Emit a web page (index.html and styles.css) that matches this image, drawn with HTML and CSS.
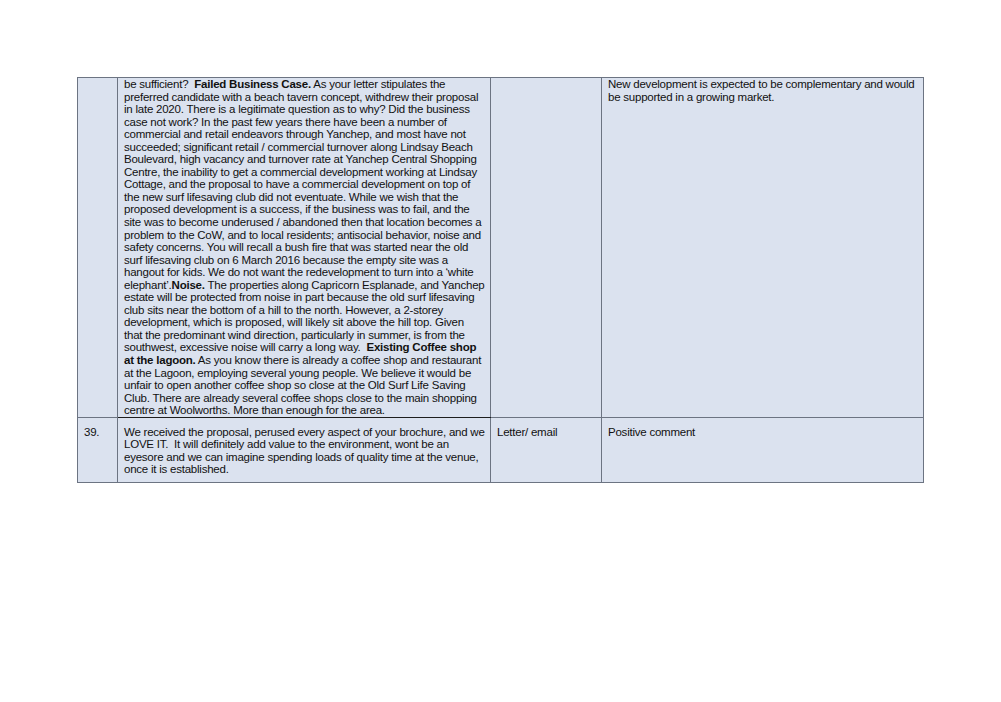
FILE: index.html
```html
<!DOCTYPE html>
<html>
<head>
<meta charset="utf-8">
<link rel="stylesheet" href="styles.css">
</head>
<body>
<div class="page">
<table class="tbl">
<colgroup>
<col class="c1"><col class="c2"><col class="c3"><col class="c4">
</colgroup>
<tr class="r1">
<td></td>
<td class="dark-bottom lines">be sufficient?&nbsp; <b>Failed Business Case.</b> As your letter stipulates the<br>
preferred candidate with a beach tavern concept, withdrew their proposal<br>
in late 2020. There is a legitimate question as to why? Did the business<br>
case not work? In the past few years there have been a number of<br>
commercial and retail endeavors through Yanchep, and most have not<br>
succeeded; significant retail / commercial turnover along Lindsay Beach<br>
Boulevard, high vacancy and turnover rate at Yanchep Central Shopping<br>
Centre, the inability to get a commercial development working at Lindsay<br>
Cottage, and the proposal to have a commercial development on top of<br>
the new surf lifesaving club did not eventuate. While we wish that the<br>
proposed development is a success, if the business was to fail, and the<br>
site was to become underused / abandoned then that location becomes a<br>
problem to the CoW, and to local residents; antisocial behavior, noise and<br>
safety concerns. You will recall a bush fire that was started near the old<br>
surf lifesaving club on 6 March 2016 because the empty site was a<br>
hangout for kids. We do not want the redevelopment to turn into a ‘white<br>
elephant’.<b>Noise.</b> The properties along Capricorn Esplanade, and Yanchep<br>
estate will be protected from noise in part because the old surf lifesaving<br>
club sits near the bottom of a hill to the north. However, a 2-storey<br>
development, which is proposed, will likely sit above the hill top. Given<br>
that the predominant wind direction, particularly in summer, is from the<br>
southwest, excessive noise will carry a long way.&nbsp; <b>Existing Coffee shop</b><br>
<b>at the lagoon.</b> As you know there is already a coffee shop and restaurant<br>
at the Lagoon, employing several young people. We believe it would be<br>
unfair to open another coffee shop so close at the Old Surf Life Saving<br>
Club. There are already several coffee shops close to the main shopping<br>
centre at Woolworths. More than enough for the area.</td>
<td></td>
<td class="lines">New development is expected to be complementary and would<br>
be supported in a growing market.</td>
</tr>
<tr class="r2">
<td>39.</td>
<td class="lines">We received the proposal, perused every aspect of your brochure, and we<br>
LOVE IT.&nbsp; It will definitely add value to the environment, wont be an<br>
eyesore and we can imagine spending loads of quality time at the venue,<br>
once it is established.</td>
<td>Letter/ email</td>
<td>Positive comment</td>
</tr>
</table>
</div>
</body>
</html>
```
FILE: styles.css
```css
html, body {
  margin: 0;
  padding: 0;
  background: #ffffff;
}
.page {
  padding: 77px 0 0 77px;
}
.tbl {
  border-collapse: collapse;
  table-layout: fixed;
  width: 847px;
  font-family: "Liberation Sans", Arial, sans-serif;
  font-size: 11.5px;
  letter-spacing: -0.23px;
  line-height: 12.55px;
  color: #111111;
}
.c1 { width: 40px; }
.c2 { width: 373px; }
.c3 { width: 111px; }
.c4 { width: 322px; }
.tbl td {
  border: 1px solid #6c7482;
  background: #dbe2ef;
  vertical-align: top;
  padding: 0 6px 0 6px;
  overflow: hidden;
}
.tbl td.lines { white-space: nowrap; }
.r1 td { height: 339px; box-sizing: border-box; }
.r2 td { height: 65px; box-sizing: border-box; padding-top: 8px; }
.tbl td.dark-bottom { border-bottom: 1px solid #1e1e1e; }
```
